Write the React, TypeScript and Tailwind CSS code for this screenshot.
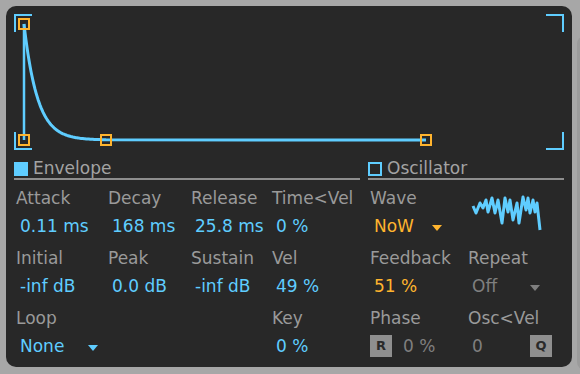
import React from "react";

const BLUE = "#5fcdff";
const ORANGE = "#ffb42e";

const decay = Array.from({ length: 83 }, (_, i) => {
  const x = 24 + i;
  const y = 140 - 116 * Math.exp(-0.075 * i);
  return `${x},${y.toFixed(1)}`;
}).join(" ");

const wave =
  "473,206 476,213 480,203 483,208 486,200 488,212 492,198 495,213 498,200 502,223 505,198 508,212 510,200 513,220 517,203 519,223 523,197 526,210 528,198 530,213 533,200 535,212 537,203 540,230";

function Tri({ color }: { color: string }) {
  return (
    <svg width="10" height="6" viewBox="0 0 10 6" className="mt-[3px]">
      <path d="M0 0 H10 L5 6 Z" fill={color} />
    </svg>
  );
}

function Label({ children, w }: { children?: React.ReactNode; w: string }) {
  return <div className={`${w} h-[20px] leading-[20px] pl-[2px] text-[#9a9a9a] whitespace-nowrap`}>{children}</div>;
}

function Value({ children, w, color = "text-[#5fcdff]" }: { children?: React.ReactNode; w: string; color?: string }) {
  return <div className={`${w} h-[20px] leading-[20px] pl-[6px] whitespace-nowrap ${color}`}>{children}</div>;
}

function Header({ title, filled }: { title: string; filled?: boolean }) {
  return (
    <div className="flex items-center gap-[5px] h-[20px] border-b-2 border-[#8e8e8e] box-content">
      <div
        className={
          filled
            ? "w-[14px] h-[14px] bg-[#5fcdff] mt-[2px]"
            : "w-[14px] h-[14px] border-2 border-[#5fcdff] mt-[2px]"
        }
      />
      <span className="leading-[20px] text-[#a3a3a3]">{title}</span>
    </div>
  );
}

function Btn({ children }: { children: string }) {
  return (
    <div className="w-[22px] h-[22px] bg-[#8f8f8f] flex items-center justify-center text-[13px] font-bold text-[#2a2a2a]">
      {children}
    </div>
  );
}

const c1 = "w-[92px]";
const c2 = "w-[83px]";
const c3 = "w-[81px]";
const c4 = "flex-1";

export default function App() {
  return (
    <div
      className="w-[580px] h-[374px] bg-[#a7a7a7] flex overflow-hidden text-[17px]"
      style={{ fontFamily: '"DejaVu Sans", sans-serif' }}
    >
      <div className="mt-[6px] ml-[6px] w-[566px] h-[361px] shrink-0 rounded-[10px] bg-[#282828] flex flex-col">
        <svg width="566" height="152" viewBox="6 6 566 152" className="block">
          <g stroke={BLUE} strokeWidth="2" fill="none">
            <path d="M15,32 V15 H32" />
            <path d="M546,15 H563 V32" />
            <path d="M15,132 V149 H32" />
            <path d="M546,149 H563 V132" />
          </g>
          <line x1="24" y1="140" x2="24" y2="24" stroke={BLUE} strokeWidth="2.5" />
          <polyline points={`${decay} 426,140`} stroke={BLUE} strokeWidth="3" fill="none" strokeLinejoin="round" />
          <g stroke={ORANGE} strokeWidth="2" fill="none">
            <rect x="19" y="19" width="10" height="10" />
            <rect x="19" y="135" width="10" height="10" />
            <rect x="101" y="135" width="10" height="10" />
            <rect x="421" y="135" width="10" height="10" />
          </g>
        </svg>

        <div className="flex pl-[8px] gap-[8px]">
          <div className="w-[346px] flex flex-col">
            <Header title="Envelope" filled />
            <div className="flex mt-[8px]">
              <Label w={c1}>Attack</Label>
              <Label w={c2}>Decay</Label>
              <Label w={c3}>Release</Label>
              <Label w={c4}>Time&lt;Vel</Label>
            </div>
            <div className="flex mt-[8px]">
              <Value w={c1}>0.11 ms</Value>
              <Value w={c2}>168 ms</Value>
              <Value w={c3}>25.8 ms</Value>
              <Value w={c4}>0 %</Value>
            </div>
            <div className="flex mt-[12px]">
              <Label w={c1}>Initial</Label>
              <Label w={c2}>Peak</Label>
              <Label w={c3}>Sustain</Label>
              <Label w={c4}>Vel</Label>
            </div>
            <div className="flex mt-[8px]">
              <Value w={c1}>-inf dB</Value>
              <Value w={c2}>0.0 dB</Value>
              <Value w={c3}>-inf dB</Value>
              <Value w={c4}>49 %</Value>
            </div>
            <div className="flex mt-[12px]">
              <Label w={c1}>Loop</Label>
              <Label w={c2} />
              <Label w={c3} />
              <Label w={c4}>Key</Label>
            </div>
            <div className="flex mt-[8px]">
              <div className={`${c1} h-[20px]`}>
                <div className="pl-[6px] w-[84px] flex items-center justify-between text-[#5fcdff] leading-[20px]">
                  <span>None</span>
                  <Tri color={BLUE} />
                </div>
              </div>
              <Value w={c2} />
              <Value w={c3} />
              <Value w={c4}>0 %</Value>
            </div>
          </div>

          <div className="w-[196px] flex flex-col">
            <Header title="Oscillator" />
            <div className="flex mt-[8px]">
              <div className="w-[98px] flex flex-col">
                <Label w="w-full">Wave</Label>
                <div className="mt-[8px] h-[20px] pl-[6px] w-[74px] flex items-center justify-between text-[#ffb42e] leading-[20px]">
                  <span>NoW</span>
                  <Tri color={ORANGE} />
                </div>
              </div>
              <svg width="80" height="48" viewBox="466 188 80 48" className="block">
                <polyline points={wave} stroke={BLUE} strokeWidth="3" fill="none" strokeLinejoin="round" />
              </svg>
            </div>
            <div className="flex mt-[12px]">
              <Label w="w-[98px]">Feedback</Label>
              <Label w="flex-1">Repeat</Label>
            </div>
            <div className="flex mt-[8px]">
              <Value w="w-[98px]" color="text-[#ffb42e]">51 %</Value>
              <div className="h-[20px] pl-[6px] w-[74px] flex items-center justify-between text-[#7f7f7f] leading-[20px]">
                <span>Off</span>
                <Tri color="#7f7f7f" />
              </div>
            </div>
            <div className="flex mt-[12px]">
              <Label w="w-[98px]">Phase</Label>
              <Label w="flex-1">Osc&lt;Vel</Label>
            </div>
            <div className="flex mt-[8px] text-[#7f7f7f] leading-[20px]">
              <div className="w-[98px] h-[20px] flex items-center pl-[2px] gap-[11px]">
                <Btn>R</Btn>
                <span>0 %</span>
              </div>
              <div className="h-[20px] flex items-center justify-between pl-[6px] w-[86px]">
                <span>0</span>
                <Btn>Q</Btn>
              </div>
            </div>
          </div>
        </div>
      </div>
      <div className="ml-[5px] mt-[36px] w-[10px] h-[334px] shrink-0 rounded-tl-[8px] rounded-bl-[8px] bg-[#9b9b9b]" />
    </div>
  );
}
